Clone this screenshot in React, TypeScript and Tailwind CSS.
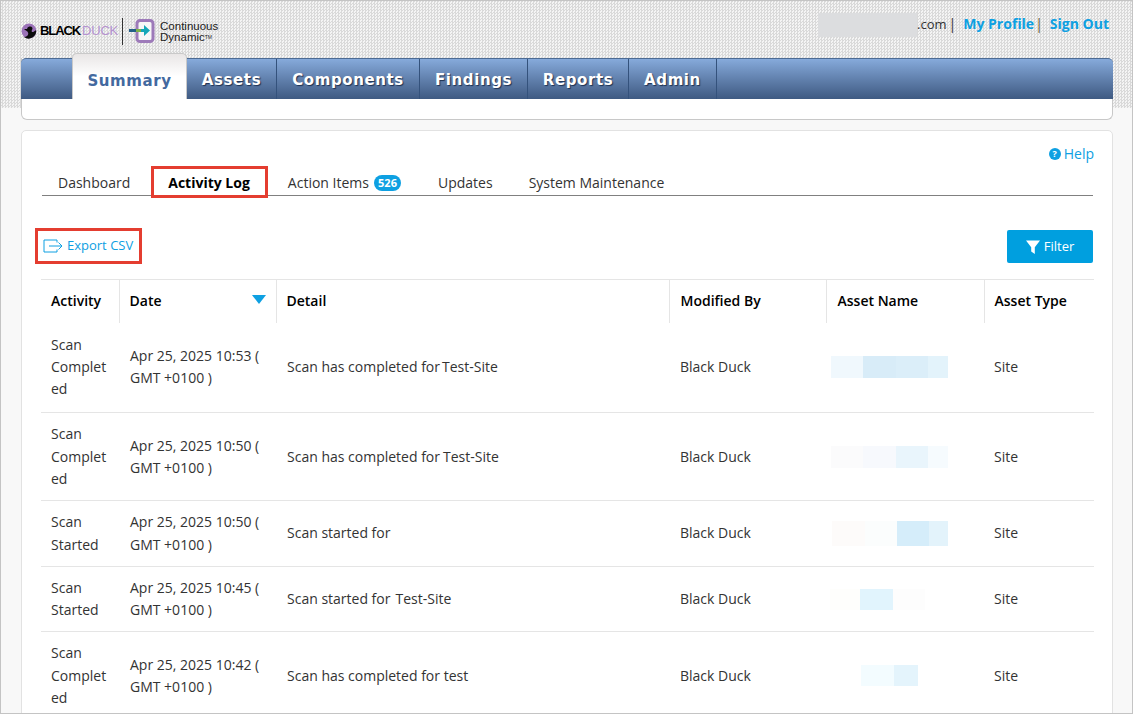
const navItems = [
  { label: "Assets", width: "w-[90px]" },
  { label: "Components", width: "w-[143px]" },
  { label: "Findings", width: "w-[108px]" },
  { label: "Reports", width: "w-[101px]" },
  { label: "Admin", width: "w-[88px]" },
];

type Blur = { w: string; color: string };

type Row = {
  activity: string;
  date: string;
  detail: string;
  target?: string;
  targetGap?: string;
  offset: string;
  blur: Blur[];
  blurH: string;
};

const rows: Row[] = [
  {
    activity: "Scan Completed",
    date: "Apr 25, 2025 10:53 ( GMT +0100 )",
    detail: "Scan has completed for",
    target: "Test-Site",
    targetGap: "ml-[2px]",
    offset: "ml-[5px]",
    blurH: "h-[22px]",
    blur: [
      { w: "w-[32px]", color: "bg-[#f0f8fd]" },
      { w: "w-[33px]", color: "bg-[#d8ecf8]" },
      { w: "w-[32px]", color: "bg-[#dbeef9]" },
      { w: "w-[20px]", color: "bg-[#e3f3fb]" },
    ],
  },
  {
    activity: "Scan Completed",
    date: "Apr 25, 2025 10:50 ( GMT +0100 )",
    detail: "Scan has completed for",
    target: "Test-Site",
    targetGap: "ml-[3px]",
    offset: "ml-[5px]",
    blurH: "h-[22px]",
    blur: [
      { w: "w-[32px]", color: "bg-[#fbfbfc]" },
      { w: "w-[33px]", color: "bg-[#f7f9fd]" },
      { w: "w-[32px]", color: "bg-[#e9f5fc]" },
      { w: "w-[20px]", color: "bg-[#f6fbfe]" },
    ],
  },
  {
    activity: "Scan Started",
    date: "Apr 25, 2025 10:50 ( GMT +0100 )",
    detail: "Scan started for",
    offset: "ml-[6px]",
    blurH: "h-[25px]",
    blur: [
      { w: "w-[33px]", color: "bg-[#fdfbfa]" },
      { w: "w-[32px]", color: "bg-[#fbfdfd]" },
      { w: "w-[32px]", color: "bg-[#d5edfa]" },
      { w: "w-[19px]", color: "bg-[#e3f3fb]" },
    ],
  },
  {
    activity: "Scan Started",
    date: "Apr 25, 2025 10:45 ( GMT +0100 )",
    detail: "Scan started for",
    target: "Test-Site",
    targetGap: "ml-[5px]",
    offset: "ml-[4px]",
    blurH: "h-[21px]",
    blur: [
      { w: "w-[30px]", color: "bg-[#fefefc]" },
      { w: "w-[33px]", color: "bg-[#e1f4fd]" },
      { w: "w-[32px]", color: "bg-[#fdfdfd]" },
    ],
  },
  {
    activity: "Scan Completed",
    date: "Apr 25, 2025 10:42 ( GMT +0100 )",
    detail: "Scan has completed for test",
    offset: "ml-[35px]",
    blurH: "h-[21px]",
    blur: [
      { w: "w-[33px]", color: "bg-[#f3fcff]" },
      { w: "w-[24px]", color: "bg-[#e4f4fc]" },
    ],
  },
];

const headers = ["Activity", "Date", "Detail", "Modified By", "Asset Name", "Asset Type"];

function Logo() {
  return (
    <div className="flex h-[30px] items-center">
      <svg width="16" height="16" viewBox="0 0 16 16" className="shrink-0">
        <circle cx="8" cy="8" r="7.5" fill="#9b72b8" />
        <path d="M3 6H6A3 3 0 0 1 11.500 5C11.500 7 10 7.500 11 9C12 9.500 14 8 15 7A7.500 7.500 0 0 1 3 14C6 14 8 12 7 9.500C6.500 8 4.500 7.500 3 6z" fill="#0c0c0c" />
      </svg>
      <span className="ml-[3px] font-['Liberation_Sans',sans-serif] text-[13px] font-bold tracking-[-1.1px] text-black">BLACK</span>
      <span className="ml-[2px] font-['Liberation_Sans',sans-serif] text-[13px] tracking-[-0.2px] text-[#b592cf]">DUCK</span>
      <div className="ml-[4px] h-[27px] w-px bg-[#333]" />
      <svg width="26" height="26" viewBox="0 0 26 26" className="ml-[6px] shrink-0">
        <rect x="8" y="2.500" width="16" height="21" rx="3" fill="#f7f7f7" stroke="#9d7ab9" strokeWidth="3" />
        <rect x="0" y="11" width="7" height="3" fill="#245f86" />
        <rect x="7" y="11" width="5" height="3" fill="#7fb24b" />
        <path d="M12 11h3V7l6 5.500-6 5.500v-4h-3z" fill="#14a7b8" />
      </svg>
      <div className="ml-[5px] pt-[2px] font-['Liberation_Sans',sans-serif] text-[11.500px] leading-[11px] text-[#222]">
        <div>Continuous</div>
        <div>Dynamic<sup className="text-[5px]">TM</sup></div>
      </div>
    </div>
  );
}

function Header() {
  return (
    <div className="h-[107px] bg-[#e6e6e6] bg-[repeating-conic-gradient(#d9d9d9_0%_25%,#f4f4f4_0%_50%)] bg-[length:3px_3px] pl-[20px] pr-[19px]">
      <div className="flex h-[57px] items-start justify-between">
        <div className="pt-[15px]">
          <Logo />
        </div>
        <div className="flex items-start pt-[12px] pr-[4px] font-['Open_Sans',sans-serif] text-[14px] leading-[22px]">
          <div className="h-[24px] w-[99px] bg-[#dcdddf]" />
          <span className="text-[13px] text-[#333]">.com</span>
          <span className="ml-[2px] text-[#333]">|</span>
          <span className="ml-[7px] font-bold text-[#0ea0e2]">My Profile</span>
          <span className="ml-[1px] text-[#5f5238]">|</span>
          <span className="ml-[7px] font-bold text-[#0ea0e2]">Sign Out</span>
        </div>
      </div>
      <div className="relative rounded-b-[6px] border-x border-b border-[#c8c8c8] bg-white pb-[20px]">
        <nav className="-mx-px flex h-[41px] rounded-t-[5px] border-t border-[#4d6b93] bg-gradient-to-b from-[#86aadb] to-[#3f5a82] pl-[51px] font-['DejaVu_Sans',sans-serif] text-[15px] font-bold tracking-[0.6px]">
          <div className="-mt-[6px] flex h-[46px] w-[115px] items-center justify-center rounded-t-[5px] border-x border-t border-[#c9c9c9] bg-gradient-to-b from-[#e9e6e6] via-white to-white pt-[9px] text-[#43699f]">
            Summary
          </div>
          {navItems.map((item) => (
            <div
              key={item.label}
              className={`flex items-center justify-center border-r border-[#34527c] pt-[2px] text-white [text-shadow:1px_1px_1px_#1d3152] ${item.width}`}
            >
              {item.label}
            </div>
          ))}
        </nav>
      </div>
    </div>
  );
}

function Tabs() {
  return (
    <div className="relative ml-[20px] mr-[19px] flex h-[33px] items-end border-b border-[#808080] pb-[2px] text-[14px] text-[#333]">
      <span className="ml-[16px] leading-[20px]">Dashboard</span>
      <span className="ml-[38px] font-bold leading-[20px] text-black">Activity Log</span>
      <span className="ml-[38px] leading-[20px]">Action Items</span>
      <span className="ml-[5px] mb-[2px] flex h-[16px] w-[27px] items-center justify-center rounded-full bg-[#0ea0e2] text-[11px] font-bold text-white">526</span>
      <span className="ml-[37px] leading-[20px]">Updates</span>
      <span className="ml-[36px] leading-[20px]">System Maintenance</span>
      <div className="absolute left-[109px] top-[3px] h-[32px] w-[117px] border-[3px] border-[#e43d30]" />
    </div>
  );
}

function ActivityTable() {
  return (
    <table className="ml-[19px] w-[1053px] table-fixed border-collapse border-t border-[#e5e5e5] text-[14px] leading-[22.3px] text-[#333]">
      <colgroup>
        <col className="w-[78px]" />
        <col className="w-[157px]" />
        <col className="w-[393px]" />
        <col className="w-[157px]" />
        <col className="w-[158px]" />
        <col className="w-[110px]" />
      </colgroup>
      <thead>
        <tr className="h-[43px]">
          {headers.map((h, i) => (
            <th
              key={h}
              className={`relative text-left font-semibold text-black ${i === 3 || i === 4 ? "pl-[11px]" : "pl-[10px]"} ${i < 5 ? "border-r border-[#e5e5e5]" : ""}`}
            >
              {h}
              {h === "Date" && (
                <span className="absolute right-[10px] top-[15px] h-0 w-0 border-x-[7px] border-t-[9px] border-x-transparent border-t-[#0ea0e2]" />
              )}
            </th>
          ))}
        </tr>
      </thead>
      <tbody>
        {rows.map((row, idx) => {
          // first row sits a bit taller than the rest
          const pad = idx === 0 ? "pt-[11px] pb-[12px]" : "py-[10px]";
          return (
            <tr key={row.date} className="border-b border-[#e5e5e5]">
              <td className={`${pad} pl-[10px] pr-[8px] align-middle [overflow-wrap:anywhere]`}>{row.activity}</td>
              <td className={`${pad} pl-[11px] align-middle`}>{row.date}</td>
              <td className={`${pad} pl-[11px] align-middle`}>
                {row.detail}
                {row.target && <span className={row.targetGap}>{row.target}</span>}
              </td>
              <td className={`${pad} pl-[11px] align-middle`}>Black Duck</td>
              <td className={`${pad} align-middle`}>
                <div className={`flex ${row.blurH} ${row.offset}`}>
                  {row.blur.map((b, i) => (
                    <div key={i} className={`${b.w} ${b.color}`} />
                  ))}
                </div>
              </td>
              <td className={`${pad} pl-[10px] align-middle`}>Site</td>
            </tr>
          );
        })}
      </tbody>
    </table>
  );
}

export default function App() {
  return (
    <div className="h-[714px] w-[1133px] overflow-hidden border border-[#c4c4c4] bg-[#f8f8f8] font-['Open_Sans',sans-serif]">
      <Header />
      <main className="ml-[20px] mr-[19px] mt-[22px] h-[700px] rounded-t-[5px] border border-[#e2e2e2] bg-white">
        <div className="flex justify-end pr-[18px] pt-[14px] text-[14px] leading-[18px] text-[#0ea0e2]">
          <div className="flex items-center gap-[3px]">
            <span className="flex h-[12px] w-[12px] items-center justify-center rounded-full bg-[#0ea0e2] text-[9px] font-bold text-white">?</span>
            Help
          </div>
        </div>
        <Tabs />
        <div className="flex h-[83px] items-start justify-between pl-[13px] pr-[19px]">
          <div className="mt-[32px] flex h-[36px] w-[107px] items-center gap-[4px] border-[3px] border-[#e43d30] pl-[5px] text-[13px] text-[#0ea0e2]">
            <svg width="20" height="14" viewBox="0 0 20 14" fill="none" stroke="#0ea0e2" strokeWidth="1">
              <path d="M14 3.500V1H1v12h13v-2.500" />
              <path d="M6 7h13M15.500 3.500 19 7l-3.500 3.500" />
            </svg>
            Export CSV
          </div>
          <button className="mt-[34px] flex h-[33px] w-[86px] items-center justify-center gap-[4px] rounded-[2px] bg-[#009fdf] text-[13px] text-white">
            <svg width="14" height="14" viewBox="0 0 14 14" fill="#fff">
              <path d="M0 .500h14L8.800 7.200V14L5.200 11.500V7.200z" />
            </svg>
            Filter
          </button>
        </div>
        <ActivityTable />
      </main>
    </div>
  );
}
